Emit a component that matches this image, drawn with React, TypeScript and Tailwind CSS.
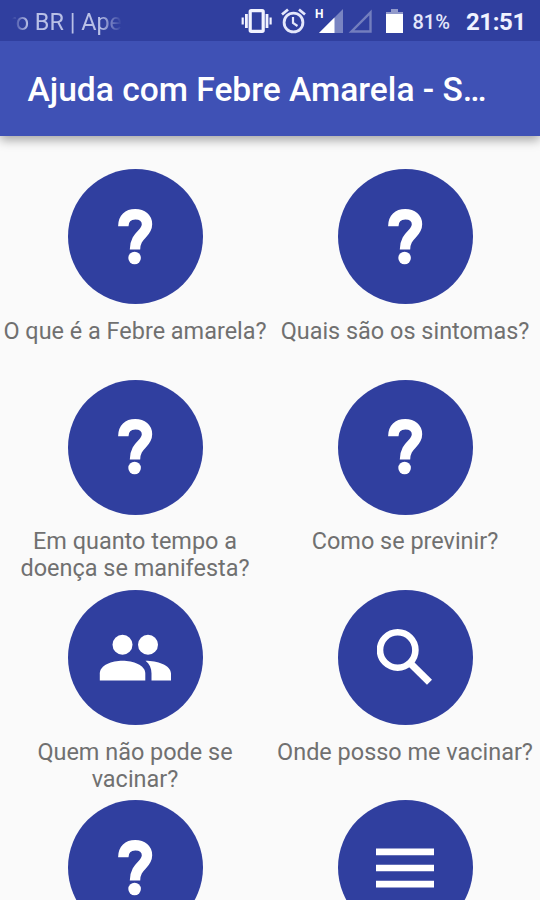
import type { ReactNode } from "react";

function QuestionIcon() {
  return (
    <svg viewBox="0 0 36 58" className="h-[58px] w-9" fill="none">
      <path
        d="M6.3 18.3C6.3 10.2 11 6.3 18.3 6.3C25.4 6.3 30 10.3 30 16.2C30 26.5 18 26.2 18 41.6"
        stroke="white"
        strokeWidth="10.4"
      />
      <circle cx="17.6" cy="50" r="6.3" fill="white" />
    </svg>
  );
}

function PeopleIcon() {
  return (
    <svg viewBox="0 0 72 48" className="h-12 w-[72px]" fill="white">
      <circle cx="23.5" cy="10.7" r="10" />
      <circle cx="49" cy="10.7" r="10" />
      <path d="M.8 46.5V39.5C.8 31 13 26.7 23.5 26.7S46.3 31 46.3 39.5V46.5Z" />
      <path d="M46.5 26.7C58 26.7 72 31 72 39.5V46.5H52.5V39.5C52.5 34 50.5 30 46.5 26.7Z" />
    </svg>
  );
}

function SearchIcon() {
  return (
    <svg viewBox="0 0 56 57" className="h-[57px] w-14" fill="none" stroke="white">
      <circle cx="20.7" cy="21" r="17.7" strokeWidth="6.6" />
      <path d="M34 35L52.5 53.2" strokeWidth="7.2" />
    </svg>
  );
}

function MenuIcon() {
  return (
    <svg viewBox="0 0 58 40" className="h-10 w-[58px]" stroke="white" strokeWidth="6.7">
      <path d="M0 3.9H58M0 20H58M0 36.1H58" />
    </svg>
  );
}

function VibrateIcon() {
  return (
    <svg viewBox="0 0 31 24" className="h-6 w-[31px]" fill="none" stroke="#f2f3ff">
      <rect x="9.2" y="1.7" width="13" height="20.6" rx="1" strokeWidth="3.2" />
      <path d="M5.4 5V19M26 5V19" strokeWidth="2.8" />
      <path d="M1.7 8.5V15.5M29.6 8.5V15.5" strokeWidth="2.2" />
    </svg>
  );
}

function AlarmIcon() {
  return (
    <svg viewBox="0 0 25 26" className="h-[26px] w-[25px]" fill="none" stroke="#e4e7fb">
      <circle cx="12.5" cy="14.5" r="9.4" strokeWidth="2.8" />
      <path d="M12 9V15L16.5 18" strokeWidth="2.2" />
      <path d="M1 6.5L7 1.5M24 6.5L18 1.5" strokeWidth="2.8" />
    </svg>
  );
}

const ITEMS: { label: string; icon: ReactNode }[] = [
  { label: "O que é a Febre amarela?", icon: <QuestionIcon /> },
  { label: "Quais são os sintomas?", icon: <QuestionIcon /> },
  { label: "Em quanto tempo a doença se manifesta?", icon: <QuestionIcon /> },
  { label: "Como se previnir?", icon: <QuestionIcon /> },
  { label: "Quem não pode se vacinar?", icon: <PeopleIcon /> },
  { label: "Onde posso me vacinar?", icon: <SearchIcon /> },
  { label: "", icon: <QuestionIcon /> },
  { label: "", icon: <MenuIcon /> },
];

function StatusBar() {
  return (
    <div className="flex h-[41px] items-center bg-[#303f9f] pl-3 text-white">
      <div className="mt-[5px] w-[110px] whitespace-nowrap text-[23.4px] text-[#b9c0e6] [mask-image:linear-gradient(to_right,transparent,black_16px,black_88px,transparent)]">
        <span className="-ml-1">ro BR | Ape</span>
      </div>
      <div className="ml-[119px] mt-px flex items-center">
        <VibrateIcon />
        <div className="ml-[9px]">
          <AlarmIcon />
        </div>
        <div className="ml-[9px] flex">
          <span className="text-[12px] font-bold leading-none">H</span>
          <svg viewBox="0 0 26 26" className="-ml-[5px] h-[26px] w-[26px]">
            <path d="M25 1V25H1Z" fill="#7984c2" />
            <path d="M16.5 9.5V25H1Z" fill="white" />
          </svg>
        </div>
        <svg viewBox="0 0 25 25" className="ml-1 h-[25px] w-[25px]" fill="none">
          <path d="M22.5 3.5V22.5H3.5Z" stroke="#737ebe" strokeWidth="2.4" />
        </svg>
        <svg viewBox="0 0 17 26" className="ml-[13px] h-[26px] w-[17px]">
          <path d="M5 1H12V4H17V8H0V4H5Z" fill="#929acb" />
          <path d="M0 6H17V25H0Z" fill="white" />
        </svg>
      </div>
      <span className="ml-[9px] mt-[3px] text-[20px] font-medium text-[#e4e7fb]">81%</span>
      <span className="ml-[16px] mt-[2px] text-[24px] font-bold tracking-[-0.4px] text-[#f0f2ff]">21:51</span>
    </div>
  );
}

export default function App() {
  return (
    <div className="h-[900px] w-[540px] overflow-hidden bg-[#fafafa] font-['Roboto',sans-serif]">
      <header className="relative shadow-[0_4px_10px_rgba(0,0,0,0.35)]">
        <StatusBar />
        <div className="flex h-[94.5px] items-center bg-[#3f51b5] pl-[27.5px] pt-[3px]">
          <h1 className="whitespace-nowrap text-[33.55px] font-medium text-white">Ajuda com Febre Amarela - S…</h1>
        </div>
      </header>

      <main className="grid auto-rows-[210.4px] grid-cols-2 pt-[33.8px]">
        {ITEMS.map((item, i) => (
          <div key={i} className="flex flex-col items-center">
            <div className="flex size-[135px] shrink-0 items-center justify-center rounded-full bg-[#303f9f]">
              {item.icon}
            </div>
            <p className="mt-[13.7px] max-w-[268px] text-center text-[23.45px] leading-[27px] text-[#707070]">{item.label}</p>
          </div>
        ))}
      </main>
    </div>
  );
}
